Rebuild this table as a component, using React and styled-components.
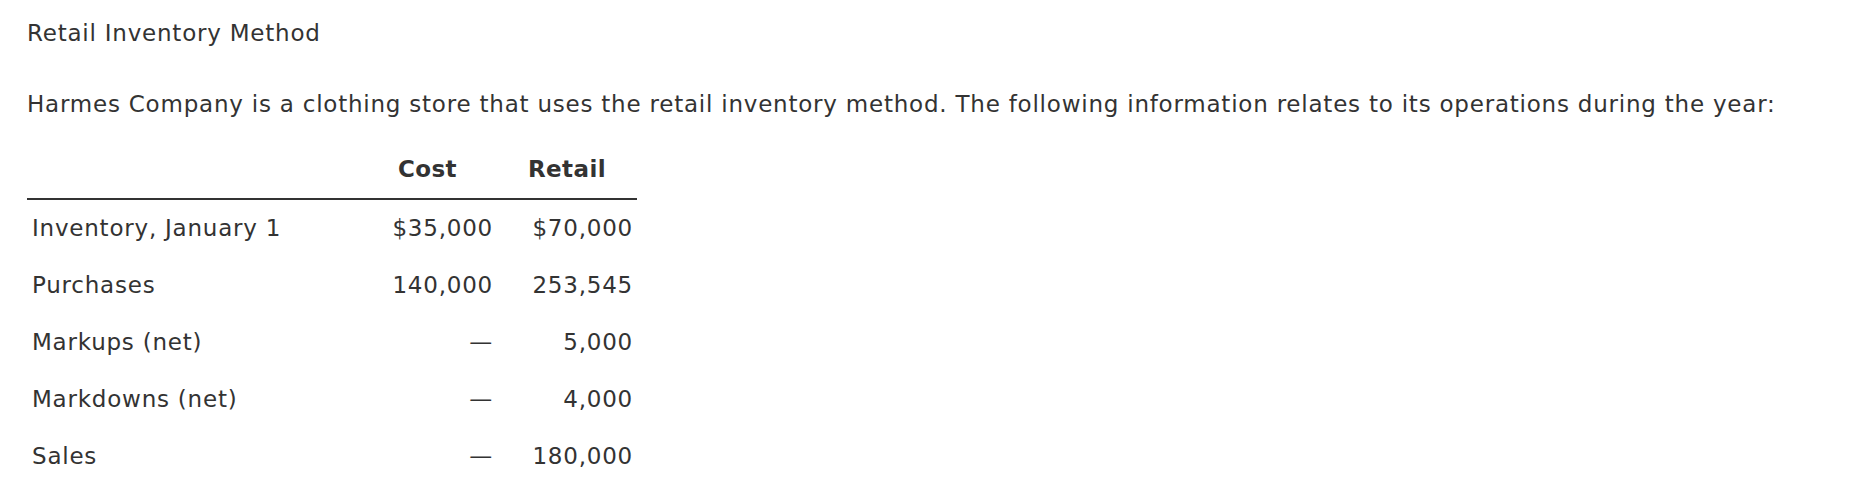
import React from 'react';
import styled, { createGlobalStyle } from 'styled-components';

const GlobalStyle = createGlobalStyle`
  body {
    margin: 0;
    background: #fff;
    color: #333;
    font-family: 'DejaVu Sans', Verdana, sans-serif;
  }
`;

const rows = [
  { label: 'Inventory, January 1', cost: '$35,000', retail: '$70,000' },
  { label: 'Purchases', cost: '140,000', retail: '253,545' },
  { label: 'Markups (net)', cost: '—', retail: '5,000' },
  { label: 'Markdowns (net)', cost: '—', retail: '4,000' },
  { label: 'Sales', cost: '—', retail: '180,000' },
];

const App = () => {
  return (
    <Page>
      <GlobalStyle />
      <Title>Retail Inventory Method</Title>
      <Intro>
        Harmes Company is a clothing store that uses the retail inventory
        method. The following information relates to its operations during the
        year:
      </Intro>
      <Table>
        <thead>
          <tr>
            <HeadCell />
            <HeadCell>Cost</HeadCell>
            <HeadCell>Retail</HeadCell>
          </tr>
        </thead>
        <tbody>
          {rows.map((r) => (
            <tr key={r.label}>
              <LabelCell>{r.label}</LabelCell>
              <NumCell>{r.cost}</NumCell>
              <NumCell>{r.retail}</NumCell>
            </tr>
          ))}
        </tbody>
      </Table>
    </Page>
  );
};

const Page = styled.div`
  padding: 18px 27px 0;
  font-size: 23px;
  line-height: 30px;
  letter-spacing: 0.78px;
`;

const Title = styled.div`
  margin: 0;
`;

const Intro = styled.p`
  margin: 41px 0 22px;
  white-space: nowrap;
`;

const Table = styled.table`
  border-collapse: collapse;
  width: 610px;
`;

const HeadCell = styled.th`
  font-weight: bold;
  text-align: center;
  letter-spacing: 0.4px;
  padding: 13px 4px 14px;
  border-bottom: 2px solid #333;
  &:first-child {
    width: 323px;
  }
  &:nth-child(2) {
    width: 131px;
  }
`;

const LabelCell = styled.td`
  text-align: left;
  padding: 13px 5px 14px;
`;

const NumCell = styled.td`
  text-align: right;
  padding: 13px 4px 14px;
  white-space: nowrap;
`;

export default App;
